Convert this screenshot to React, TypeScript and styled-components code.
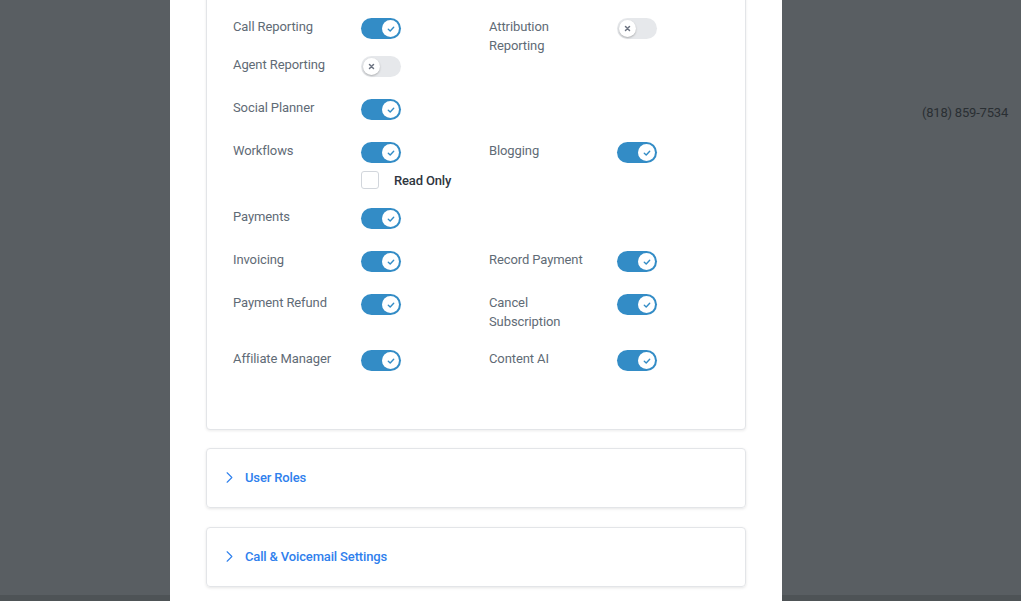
import React from 'react';
import styled, { createGlobalStyle } from 'styled-components';
import { ChevronRight } from 'lucide-react';

const GlobalStyle = createGlobalStyle`
  html, body {
    margin: 0;
    padding: 0;
    height: 601px;
    overflow: hidden;
  }
  body {
    font-family: Roboto, "Liberation Sans", Arial, sans-serif;
  }
`;

type Perm = { label: string; on: boolean; readOnly?: boolean } | null;

const rows: { items: [Perm, Perm]; mb: number }[] = [
  { items: [{ label: 'Call Reporting', on: true }, { label: 'Attribution Reporting', on: false }], mb: 0 },
  { items: [{ label: 'Agent Reporting', on: false }, null], mb: 21 },
  { items: [{ label: 'Social Planner', on: true }, null], mb: 21 },
  { items: [{ label: 'Workflows', on: true, readOnly: true }, { label: 'Blogging', on: true }], mb: 18 },
  { items: [{ label: 'Payments', on: true }, null], mb: 21 },
  { items: [{ label: 'Invoicing', on: true }, { label: 'Record Payment', on: true }], mb: 21 },
  { items: [{ label: 'Payment Refund', on: true }, { label: 'Cancel Subscription', on: true }], mb: 18 },
  { items: [{ label: 'Affiliate Manager', on: true }, { label: 'Content AI', on: true }], mb: 0 },
];

const Toggle = ({ on }: { on: boolean }) => (
  <Track $on={on}>
    <Knob $on={on}>
      {on ? (
        <svg width="8" height="8" viewBox="0 0 8 8">
          <path d="M1.3 4.2 L3.2 5.9 L6.7 2.2" fill="none" stroke="#338cc6" strokeWidth="1.4" strokeLinecap="round" strokeLinejoin="round" />
        </svg>
      ) : (
        <svg width="7" height="7" viewBox="0 0 7 7">
          <path d="M1.5 1.5 L5.5 5.5 M5.5 1.5 L1.5 5.5" fill="none" stroke="#6b7280" strokeWidth="1.5" strokeLinecap="round" />
        </svg>
      )}
    </Knob>
  </Track>
);

export default function App() {
  return (
    <Page>
      <GlobalStyle />
      <Backdrop>
        <Phone>(818) 859-7534</Phone>
        <Footer />
      </Backdrop>
      <Modal>
        <Body>
          <Card>
            <Grid>
              {rows.map((row, i) => (
                <Row key={i} $mb={row.mb}>
                  {row.items.map((item, j) => (
                    <Cell key={j}>
                      {item && (
                        <>
                          <Label>{item.label}</Label>
                          <Controls>
                            <Toggle on={item.on} />
                            {item.readOnly && (
                              <CheckRow>
                                <Checkbox />
                                <CheckLabel>Read Only</CheckLabel>
                              </CheckRow>
                            )}
                          </Controls>
                        </>
                      )}
                    </Cell>
                  ))}
                </Row>
              ))}
            </Grid>
          </Card>
          <Section>
            <ChevronRight size={19} strokeWidth={1.4} color="#2f80ed" />
            <SectionTitle>User Roles</SectionTitle>
          </Section>
          <Section>
            <ChevronRight size={19} strokeWidth={1.4} color="#2f80ed" />
            <SectionTitle>Call &amp; Voicemail Settings</SectionTitle>
          </Section>
        </Body>
      </Modal>
    </Page>
  );
}

const Page = styled.div`
  position: relative;
  width: 1021px;
  height: 601px;
  overflow: hidden;
  background: #595e62;
`;

const Backdrop = styled.div`
  height: 601px;
  display: flex;
  flex-direction: column;
  justify-content: space-between;
`;

const Phone = styled.div`
  align-self: flex-end;
  margin: 105px 13px 0 0;
  font-size: 13px;
  line-height: 16px;
  letter-spacing: -0.2px;
  color: #2a2f33;
`;

const Footer = styled.div`
  height: 6px;
  background: #4e5356;
`;

const Modal = styled.div`
  position: absolute;
  top: 0;
  left: 170px;
  width: 612px;
  height: 601px;
  background: #ffffff;
  overflow: hidden;
`;

const Body = styled.div`
  margin-top: -30px;
  padding: 0 36px;
  display: flex;
  flex-direction: column;
  gap: 18px;
`;

const Card = styled.div`
  background: #fff;
  border: 1px solid #e3e5e8;
  border-radius: 4px;
  box-shadow: 0 1px 3px rgba(0, 0, 0, 0.08);
`;

const Grid = styled.div`
  padding: 46px 26px 58px 26px;
`;

const Row = styled.div<{ $mb: number }>`
  display: grid;
  grid-template-columns: 256px 256px;
  margin-bottom: ${(p) => p.$mb}px;
`;

const Cell = styled.div`
  display: flex;
  align-items: flex-start;
  min-height: 22px;
`;

const Label = styled.div`
  width: 128px;
  padding-right: 16px;
  box-sizing: border-box;
  font-size: 13px;
  line-height: 19px;
  letter-spacing: -0.1px;
  color: #5f6b76;
`;

const Controls = styled.div`
  display: flex;
  flex-direction: column;
  padding-top: 1px;
`;

const Track = styled.div<{ $on: boolean }>`
  width: 40px;
  height: 21px;
  border-radius: 11px;
  background: ${(p) => (p.$on ? '#338cc6' : '#e6e8eb')};
  display: flex;
  align-items: center;
  justify-content: ${(p) => (p.$on ? 'flex-end' : 'flex-start')};
  padding: 0 2px;
  box-sizing: border-box;
`;

const Knob = styled.div<{ $on: boolean }>`
  width: 17px;
  height: 17px;
  border-radius: 50%;
  background: #fff;
  display: flex;
  align-items: center;
  justify-content: center;
  box-shadow: ${(p) => (p.$on ? 'none' : '0 1px 2px rgba(0,0,0,0.25)')};
`;

const CheckRow = styled.div`
  display: flex;
  align-items: center;
  gap: 15px;
  margin-top: 8px;
`;

const Checkbox = styled.div`
  width: 18px;
  height: 18px;
  box-sizing: border-box;
  border: 1px solid #d2d6dc;
  border-radius: 3px;
  background: #fff;
`;

const CheckLabel = styled.span`
  font-size: 13px;
  font-weight: 500;
  letter-spacing: -0.15px;
  color: #2f3640;
  white-space: nowrap;
`;

const Section = styled.div`
  height: 60px;
  box-sizing: border-box;
  border: 1px solid #e3e5e8;
  border-radius: 4px;
  box-shadow: 0 1px 3px rgba(0, 0, 0, 0.1);
  display: flex;
  align-items: center;
  padding: 0 0 2px 13px;
  gap: 6px;

  & + & {
    margin-top: 1px;
  }
`;

const SectionTitle = styled.span`
  font-size: 13px;
  font-weight: 500;
  letter-spacing: -0.15px;
  color: #2f80ed;
`;
